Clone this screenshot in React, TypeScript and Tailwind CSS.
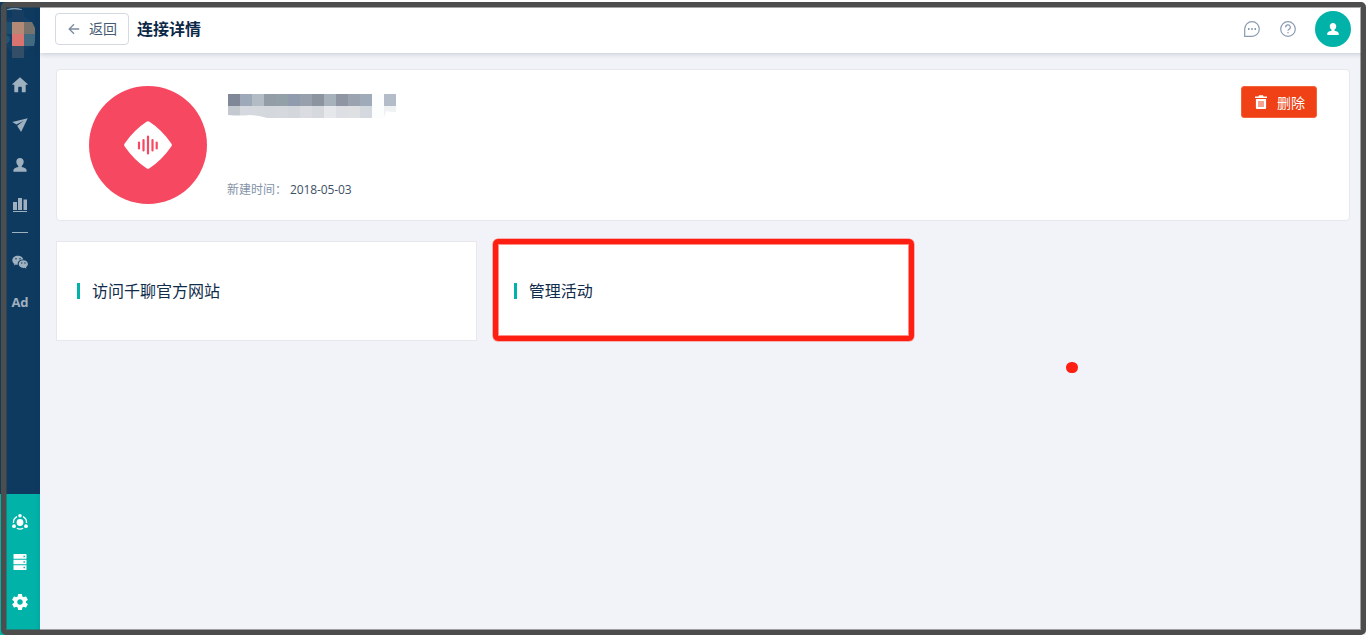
import React from "react";

interface IconProps {
  className?: string;
}

const HomeIcon: React.FC<IconProps> = ({ className }) => (
  <svg viewBox="0 0 16 16" fill="currentColor" className={className}>
    <path d="M8 .2.4 7c-.3.3-.1.800.3.800h1.600v6.600c0 .6.3.9.9.9h3v-4.500c0-.6.4-1 1-1h1.600c.6 0 1 .4 1 1v4.500h3c.6 0 .9-.3.9-.9V7.800h1.600c.4 0 .6-.5.3-.8L8 .2Z" />
  </svg>
);

const PlaneIcon: React.FC<IconProps> = ({ className }) => (
  <svg viewBox="0 0 16 16" fill="currentColor" className={className}>
    <path d="M15.700 1.200.3 4.900l4.100 2.700 7.400-3.900-6.500 5v.3L9.100 15l6.600-13.800Z" />
  </svg>
);

const UserIcon: React.FC<IconProps> = ({ className }) => (
  <svg viewBox="0 0 16 16" fill="currentColor" className={className}>
    <path d="M8 1C5.800 1 4.300 2.500 4.300 4.600c0 1.800.7 3.400 2 4.300v1.200c-2.900.6-4.900 1.600-5 3.600 0 .7.2 1.100.8 1.100h11.800c.6 0 .8-.4.8-1.100-.1-2-2.100-3-5-3.600V8.900c1.300-.9 2-2.500 2-4.300C11.700 2.500 10.200 1 8 1Z" />
  </svg>
);

const ChartIcon: React.FC<IconProps> = ({ className }) => (
  <svg viewBox="0 0 16 16" fill="currentColor" className={className}>
    <path d="M1 5H5V13H1zM6 1H10V13H6zM11.500 2.500H15V13H11.500zM1 14H15V15H1z" />
  </svg>
);

const WechatIcon: React.FC<IconProps> = ({ className }) => (
  <svg viewBox="0 0 16 16" fill="currentColor" className={className}>
    <path
      fillRule="evenodd"
      d="M6 1.700C2.800 1.700.3 3.700.3 6.300c0 1.500.8 2.800 2.100 3.600l-.5 1.700 2-1c.6.1 1.200.2 1.900.2-.6-3 1.900-5.300 5.600-5.200C10.900 3.300 8.700 1.700 6 1.700ZM4 4a.8.8 0 1 1 0 1.600A.8.8 0 0 1 4 4Zm4 0a.8.8 0 1 1 0 1.600A.8.8 0 0 1 8 4Z"
    />
    <path
      fillRule="evenodd"
      d="M11.300 6.300c-2.600 0-4.600 1.600-4.600 3.800s2 3.900 4.600 3.900c.5 0 1-.1 1.500-.2l1.600.9-.4-1.500c1.100-.7 1.900-1.800 1.900-3.100 0-2.200-2-3.800-4.600-3.800ZM9.800 8.300a.7.7 0 1 1 0 1.400.7.7 0 0 1 0-1.400Zm3.200 0a.7.7 0 1 1 0 1.400.7.7 0 0 1 0-1.400Z"
    />
  </svg>
);

const HubIcon: React.FC<IconProps> = ({ className }) => (
  <svg viewBox="0 0 16 16" fill="currentColor" className={className}>
    <circle cx="8" cy="8.500" r="3.400" />
    <circle cx="8" cy="1.800" r="1.800" />
    <circle cx="2" cy="12.200" r="1.900" />
    <circle cx="14" cy="12.200" r="1.900" />
    <path
      d="M5 2.700A6.500 6.500 0 0 0 1.500 9M11 2.700A6.500 6.500 0 0 1 14.500 9M4.800 14.200a6.700 6.700 0 0 0 6.400 0"
      fill="none"
      stroke="currentColor"
      strokeWidth="1.300"
    />
  </svg>
);

const ServerIcon: React.FC<IconProps> = ({ className }) => (
  <svg viewBox="0 0 16 16" fill="currentColor" className={className}>
    <path
      fillRule="evenodd"
      d="M2 0h12q.5 0 .5.500v4.200H1.500V.5Q1.500 0 2 0ZM1.500 5.700h13v4.600h-13zM1.500 11.300h13v4.200q0 .5-.5.5H2q-.5 0-.5-.5zM11.500 1.800v1.400h1.400V1.800zM11.500 7.300v1.400h1.400V7.300zM11.500 12.800v1.400h1.400v-1.400z"
    />
  </svg>
);

const GearIcon: React.FC<IconProps> = ({ className }) => (
  <svg viewBox="2 2 20 20" fill="currentColor" className={className}>
    <path d="M19.430 12.980c.04-.32.07-.64.07-.98s-.03-.66-.07-.98l2.110-1.650c.19-.15.24-.42.12-.64l-2-3.460c-.12-.22-.39-.3-.61-.22l-2.490 1c-.52-.4-1.080-.73-1.690-.98l-.38-2.650A.488.488 0 0 0 14 2h-4c-.25 0-.46.18-.49.42l-.38 2.650c-.61.25-1.170.59-1.690.98l-2.490-1c-.23-.09-.49 0-.61.22l-2 3.460c-.13.22-.07.49.12.64l2.110 1.650c-.04.32-.07.65-.07.98s.03.66.07.98l-2.110 1.650c-.19.15-.24.42-.12.64l2 3.460c.12.22.39.3.61.22l2.490-1c.52.4 1.080.73 1.690.98l.38 2.650c.03.24.24.42.49.42h4c.25 0 .46-.18.49-.42l.38-2.650c.61-.25 1.170-.59 1.690-.98l2.490 1c.23.09.49 0 .61-.22l2-3.460c.12-.22.07-.49-.12-.64l-2.110-1.650ZM12 15.500c-1.930 0-3.500-1.570-3.500-3.500s1.570-3.500 3.500-3.500 3.500 1.570 3.500 3.500-1.570 3.500-3.500 3.500Z" />
  </svg>
);

const BackIcon: React.FC<IconProps> = ({ className }) => (
  <svg viewBox="0 0 12 12" fill="none" stroke="currentColor" strokeWidth="1.300" className={className}>
    <path d="M11.200 6H1.300M6 1.200 1.200 6 6 10.800" />
  </svg>
);

const ChatIcon: React.FC<IconProps> = ({ className }) => (
  <svg viewBox="0 0 16 16" fill="none" stroke="currentColor" strokeWidth="1.200" className={className}>
    <path d="M.7 15.300V8a7.300 7.300 0 1 1 7.300 7.300Z" />
    <path d="M4 8h1.500M7.250 8h1.500M10.500 8H12" strokeWidth="1.800" />
  </svg>
);

const HelpIcon: React.FC<IconProps> = ({ className }) => (
  <svg viewBox="0 0 16 16" fill="none" stroke="currentColor" strokeWidth="1.200" className={className}>
    <circle cx="8" cy="8" r="7.300" />
    <path d="M5.700 6.400A2.300 2.300 0 1 1 9 8.200c-.7.4-1 .7-1 1.500M8 11v1.200" />
  </svg>
);

const TrashIcon: React.FC<IconProps> = ({ className }) => (
  <svg viewBox="0 0 12 14" fill="currentColor" className={className}>
    <path d="M0 1.500h3.500L4 .300h4l.5 1.200H12V3H0zM.9 4h10.200v9q0 1-1 1H1.900q-1 0-1-1z" />
    <path d="M3 6h6v6H3z" className="fill-[#f7a28c]" />
  </svg>
);

const navItems = [HomeIcon, PlaneIcon, UserIcon, ChartIcon];
const toolItems = [HubIcon, ServerIcon, GearIcon];

// censored account name, one colour per block
const nameTop = [
  "#808797", "#9da8b8", "#b3bbc5", "#939da6", "#94a0a8", "#909bad", "#98a0ad",
  "#8b949f", "#a7b1bb", "#9095a3", "#9ba2b0", "#9fabb8", "#fcfdfd", "#b3bcc8",
];
const nameBottom = [
  "#c4c8cf", "#d5d8df", "#d5d9de", "#d4d8dc", "#d5d9dd", "#d3d7dc", "#dadce2",
  "#d5d9dd", "#e5e7eb", "#dddfe4", "#dfe0e2", "#d4d8df", "#fcfdfd",
];

const AccountMark = () => (
  <svg viewBox="0 0 40 60" className="h-[60px] w-10">
    <circle cx="18" cy="34" r="18" fill="#133f66" />
    <path d="M6 22h6v12H6z" fill="#1c4e70" />
    <path d="M6 35q4 1 4 4t-4 5z" fill="#1f5478" />
    <path d="M7 9.500q7-2.500 15 0-7-.8-15 0z" fill="#b4c3d0" stroke="#91a7b9" strokeWidth=".5" />
    <path d="M12 10h12v12H12z" fill="#173e61" />
    <path d="M12 22h12v12H12z" fill="#b48a77" />
    <path d="M24 22h8l3 6v6H24z" fill="#77736c" />
    <path d="M12 34h12v12H12z" fill="#da7470" />
    <path d="M24 34h11v7l-1 5H24z" fill="#426a81" />
    <path d="M12 46h12v12H12z" fill="#344e67" />
  </svg>
);

const Sidebar = () => (
  <aside className="flex w-10 shrink-0 flex-col justify-between bg-[#0e3a60] text-[#9fb0bf]">
    <div className="flex flex-col items-center">
      <AccountMark />
      <nav className="flex flex-col items-center gap-6 pt-[17px]">
        {navItems.map((Icon, i) => (
          <Icon key={i} className="size-4" />
        ))}
      </nav>
      <div className="mt-[19px] h-px w-4 bg-[#9fb0bf]" />
      <WechatIcon className="mt-[21px] size-4" />
      <span className="mt-[22px] text-[13px] leading-5 font-bold">Ad</span>
    </div>
    <div className="flex h-[141px] flex-col items-center gap-6 bg-[#00b2a7] pt-5 text-white">
      {toolItems.map((Icon, i) => (
        <Icon key={i} className="size-4" />
      ))}
    </div>
  </aside>
);

const Header = () => (
  <header className="relative flex h-[53px] items-center bg-white pt-[5px] pr-[15px] pl-[15px] shadow-[0_1px_5px_rgba(40,50,80,0.22)]">
    <button className="flex h-8 w-[74px] items-center rounded border border-[#d3dae2] pl-3 text-sm text-[#465b72]">
      <BackIcon className="mr-[9px] size-3 text-[#7b8b9e]" />
      返回
    </button>
    <h1 className="ml-2 flex-1 text-base font-bold text-[#0b2847]">连接详情</h1>
    <ChatIcon className="size-4 text-[#8a9bb0]" />
    <HelpIcon className="mr-[19px] ml-5 size-4 text-[#8a9bb0]" />
    <div className="flex size-9 items-center justify-center rounded-full bg-[#00b2a7] text-white">
      <UserIcon className="size-[14px]" />
    </div>
  </header>
);

const AppLogo = () => (
  <div className="flex size-[118px] items-center justify-center rounded-full bg-[#f74861]">
    <svg viewBox="0 0 48 48" className="size-12">
      <path
        d="M22.500.800Q24-.500 25.500.800 38 9 47.300 22.500 48.400 24 47.300 25.500 38 39 25.500 47.200 24 48.500 22.500 47.200 10 39 .7 25.500-.4 24 .7 22.500 10 9 22.500.800Z"
        fill="#fff"
      />
      <path
        d="M15 21.500v6M19.500 19v10.500M24 15.500v17M28.500 19v10.500M32.700 21.500v6"
        stroke="#f74861"
        strokeWidth="2.200"
        strokeLinecap="round"
      />
    </svg>
  </div>
);

const MaskedName = () => (
  <svg viewBox="0 0 180 26" className="h-[26px] w-[180px]" shapeRendering="crispEdges">
    {nameTop.map((color, i) => (
      <rect key={i} x={i * 12} y="0" width="12" height="12" fill={color} />
    ))}
    {nameBottom.map((color, i) => (
      <rect key={i} x={i * 12} y="12" width="12" height="12" fill={color} />
    ))}
    <path d="M0 21q12 1 22 0 8 .5 17 3H0z" fill="#fff" shapeRendering="auto" />
    <path d="M156 12h12v6q-6 0-10-1-1 4-2 6z" fill="#f0f1f3" shapeRendering="auto" />
  </svg>
);

const DetailCard = () => (
  <section className="flex h-[152px] items-start rounded border border-[#e6e8ec] bg-white px-8 pt-4">
    <AppLogo />
    <div className="flex h-[118px] flex-1 flex-col justify-between pt-2 pl-[21px]">
      <MaskedName />
      <p className="-ml-px flex gap-[3px] pb-[5px] text-xs leading-[18px]">
        <span className="text-[#8393a7]">新建时间：</span>
        <span className="tracking-[-0.1px] text-[#3d4f66]">2018-05-03</span>
      </p>
    </div>
    <button className="flex h-8 w-[76px] items-center rounded-[3px] border border-[#f5623c] bg-[#ef4115] pl-[13px] text-sm text-white">
      <TrashIcon className="mr-2.5 h-[14px] w-3" />
      <span className="pt-px">删除</span>
    </button>
  </section>
);

interface LinkCardProps {
  title: string;
  active?: boolean;
}

const LinkCard: React.FC<LinkCardProps> = ({ title, active }) => (
  <div className="relative flex h-[100px] items-center border border-[#e6e8ec] bg-white pl-5">
    <span className="h-4 w-[3px] bg-[#00b2a7]" />
    <span className="ml-3 text-base text-[#0f2c4b]">{title}</span>
    {active && (
      <div className="absolute -top-[3px] -right-[2px] -bottom-[1px] -left-[1px] rounded-[5px] border-5 border-[#ff1f12] shadow-[0_0_0_0.5px_#ff1f1299,inset_0_0_0_1px_#ff1f1280]" />
    )}
  </div>
);

const App: React.FC = () => {
  return (
    <div className="relative flex h-[635px] w-[1366px] overflow-hidden bg-[#f2f3f8] font-['Open_Sans','Noto_Sans_CJK_SC',sans-serif]">
      <Sidebar />
      <div className="flex flex-1 flex-col shadow-[0_0_5px_rgba(40,50,80,0.15)]">
        <Header />
        <main className="flex flex-col gap-5 pt-4 pr-4 pl-4">
          <DetailCard />
          <div className="grid grid-cols-3 gap-4">
            <LinkCard title="访问千聊官方网站" />
            <LinkCard title="管理活动" active />
          </div>
        </main>
      </div>

      {/* Annotation marks */}
      <div className="absolute top-[362px] left-[1066px] h-[11px] w-3 rounded-full bg-[#ff1f12]" />
      <div className="absolute top-0 left-0 h-0.5 w-10 bg-white" />
      <div className="absolute top-0.5 right-0 bottom-0 left-px rounded-[5px] border-5 border-[#4d4d4d] shadow-[inset_0_0_0_1px_rgba(77,77,77,0.5)]" />
    </div>
  );
};

export default App;
